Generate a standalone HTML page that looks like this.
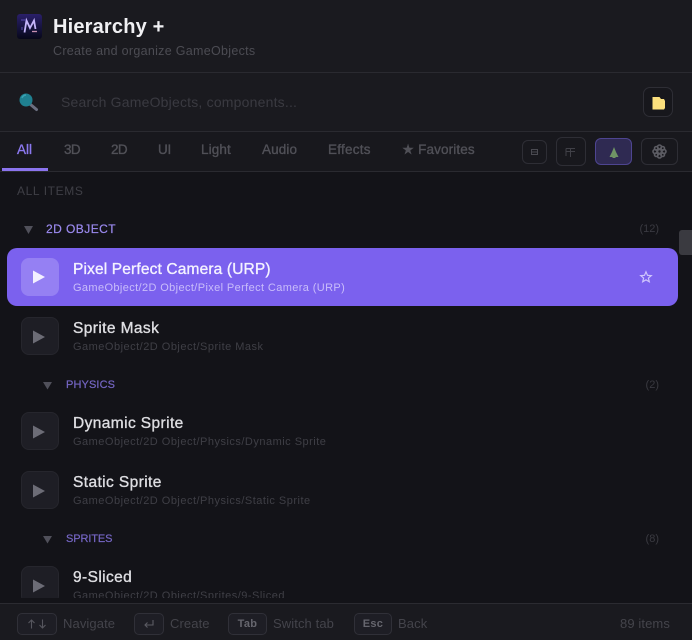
<!DOCTYPE html>
<html><head><meta charset="utf-8">
<style>
*{margin:0;padding:0;box-sizing:border-box}
html,body{width:692px;height:640px;overflow:hidden;background:#131318;font-family:"Liberation Sans",sans-serif}
#app{position:relative;width:692px;height:640px;overflow:hidden;filter:blur(.3px)}
.a{position:absolute;white-space:nowrap}
.bar{position:absolute;left:0;width:692px;background:#1a1a1f}
.line{position:absolute;left:0;width:692px;height:1px;background:#2a2a30}
.tab{position:absolute;top:142px;font-size:13.5px;line-height:16px;-webkit-text-stroke:.35px currentColor;color:#505057;letter-spacing:.12px;white-space:nowrap}
.btn{position:absolute;border:1px solid #2e2e35;border-radius:6px}
.ic{position:absolute;left:21px;width:38px;height:38px;border-radius:8px;background:#1e1e25;border:1px solid #26262d}
.ic svg{position:absolute;left:9px;top:11px}
.t{position:absolute;left:73px;font-size:15.500px;line-height:18px;-webkit-text-stroke:.35px currentColor;color:#dedee2;letter-spacing:.4px;white-space:nowrap}
.s{position:absolute;left:73px;font-size:11px;line-height:14px;color:#3f3f46;letter-spacing:.49px;white-space:nowrap}
.sec{position:absolute;font-size:11px;line-height:14px;-webkit-text-stroke:.2px currentColor;color:#7566c4;letter-spacing:.12px;white-space:nowrap}
.n{position:absolute;right:33px;font-size:11px;line-height:14px;color:#3a3a41;white-space:nowrap}
.key{position:absolute;top:613px;height:22px;border:1px solid #303038;border-radius:5px;background:#1e1e25;font-size:11px;line-height:20px;font-weight:bold;color:#66666e;text-align:center;letter-spacing:.3px}
.h{position:absolute;top:616px;font-size:13px;line-height:16px;color:#44444b;letter-spacing:.1px;white-space:nowrap}
</style></head>
<body><div id="app">

<div class="bar" style="top:0;height:72px"></div>
<div class="bar" style="top:73px;height:58px"></div>
<div class="bar" style="top:132px;height:39px;background:#18181d"></div>
<div class="line" style="top:72px"></div>
<div class="line" style="top:131px"></div>
<div class="line" style="top:171px"></div>

<svg class="a" style="left:17px;top:14px" width="25" height="25" viewBox="0 0 25 25">
<defs><linearGradient id="g" x1="0" y1="0" x2="0" y2="1"><stop offset="0" stop-color="#2a1f6a"/><stop offset=".6" stop-color="#14123a"/><stop offset="1" stop-color="#07071a"/></linearGradient></defs>
<rect width="25" height="25" rx="3" fill="url(#g)"/>
<path d="M7.500 18.500 L9.500 6.500 L13 14 L17 6.500 L18.500 15" fill="none" stroke="#c4b5fa" stroke-width="1.800"/>
<path d="M4 6 H9" stroke="#5a4ab0" stroke-width="1"/>
<path d="M15 17.500 h5" stroke="#c890b0" stroke-width="1.300"/>
<path d="M5 13 v3" stroke="#5a4ab0" stroke-width="1"/>
</svg>
<div class="a" style="left:53px;top:15px;font-size:20px;line-height:24px;font-weight:bold;color:#f0f0f3;letter-spacing:.18px">Hierarchy +</div>
<div class="a" style="left:53px;top:43px;font-size:12.500px;line-height:16px;color:#4c4c53;letter-spacing:.3px">Create and organize GameObjects</div>

<svg class="a" style="left:18px;top:92px" width="21" height="20" viewBox="0 0 21 20">
<path d="M12.500 12.500 L18.500 17.500" stroke="#6b6f80" stroke-width="3" stroke-linecap="round"/>
<circle cx="8" cy="8" r="6.500" fill="#1f8090"/>
<path d="M4 6 A4.500 4.500 0 0 1 8 3" stroke="#3aa3b3" stroke-width="1.500" fill="none"/>
</svg>
<div class="a" style="left:61px;top:94px;font-size:14px;line-height:17px;color:#3a3a41;letter-spacing:.2px">Search GameObjects, components...</div>
<div class="btn" style="left:643px;top:87px;width:30px;height:30px;border-radius:7px;background:#17171c"></div>
<svg class="a" style="left:651px;top:96px" width="15" height="15" viewBox="0 0 15 15"><path d="M1.500 1 H8.500 L10 3 H13 L14 5 V12 L13 13.500 H1.500 Z" fill="#fbe07d"/></svg>

<div class="tab" style="left:17px;color:#8b78ee;letter-spacing:0">All</div>
<div class="tab" style="left:64px;letter-spacing:-.6px">3D</div>
<div class="tab" style="left:111px;letter-spacing:-.6px">2D</div>
<div class="tab" style="left:158px;letter-spacing:-.3px">UI</div>
<div class="tab" style="left:201px">Light</div>
<div class="tab" style="left:262px">Audio</div>
<div class="tab" style="left:328px;letter-spacing:.25px">Effects</div>
<div class="tab" style="left:402px">★ Favorites</div>
<div class="a" style="left:2px;top:168px;width:46px;height:3px;background:#8b74ee"></div>

<div class="btn" style="left:522px;top:140px;width:25px;height:24px"></div>
<svg class="a" style="left:530px;top:148px" width="9" height="8" viewBox="0 0 9 8"><path d="M1.500 1.500 H7.500 V6.500 H1.500 Z M1.500 4 H7.500" fill="none" stroke="#4a4a51"/></svg>
<div class="btn" style="left:556px;top:137px;width:30px;height:29px"></div>
<svg class="a" style="left:565px;top:147px" width="12" height="11" viewBox="0 0 12 11"><path d="M1 1.500 H10 M1 4.500 H10 M5.500 1.500 V10 M1 1.500 V9" fill="none" stroke="#404047"/></svg>
<div class="btn" style="left:595px;top:138px;width:37px;height:27px;background:#2f2a52;border-color:#4e4591"></div>
<svg class="a" style="left:608px;top:146px" width="12" height="13" viewBox="0 0 12 13"><path d="M6 1 L8 6 L10.500 11 H1.500 L4 6 Z" fill="#6f9465"/><path d="M4.500 11 h3 v1 h-3z" fill="#6f9465"/></svg>
<div class="btn" style="left:641px;top:138px;width:37px;height:27px"></div>
<svg class="a" style="left:652px;top:144px" width="15" height="15" viewBox="0 0 15 15" fill="none" stroke="#5c5c63" stroke-width="1.600"><circle cx="7.500" cy="7.500" r="2"/><circle cx="7.500" cy="3" r="2"/><circle cx="7.500" cy="12" r="2"/><circle cx="3" cy="7.500" r="2"/><circle cx="12" cy="7.500" r="2"/><circle cx="4.300" cy="4.300" r="1.800"/><circle cx="10.700" cy="4.300" r="1.800"/><circle cx="4.300" cy="10.700" r="1.800"/><circle cx="10.700" cy="10.700" r="1.800"/></svg>

<div class="a" style="left:17px;top:184px;font-size:12px;line-height:14px;color:#3f3f46;letter-spacing:.62px">ALL ITEMS</div>

<svg class="a" style="left:23px;top:225px" width="11" height="10"><path d="M1 1 H10 L5.500 9 Z" fill="#50505a"/></svg>
<div class="sec" style="left:46px;top:222px;font-size:12px;color:#9b8aef;letter-spacing:.45px;line-height:15px">2D OBJECT</div>
<div class="n" style="top:222px">(12)</div>

<div class="a" style="left:679px;top:230px;width:13px;height:25px;background:#3a3a40;border-radius:3px 0 0 3px"></div>

<div class="a" style="left:7px;top:248px;width:671px;height:58px;border-radius:10px;background:#7b61ee"></div>
<div class="ic" style="left:21px;top:258px;background:#9580f3;border-color:#9580f3"><svg style="top:10px" width="16" height="16" viewBox="0 0 16 16"><path d="M2 1.500 L14 8 L2 14.500 Z" fill="#f3f0ff"/></svg></div>
<div class="t" style="top:261px;color:#f4f2ff;letter-spacing:.15px">Pixel Perfect Camera (URP)</div>
<div class="s" style="top:281px;color:#c9bdfa;letter-spacing:.38px">GameObject/2D Object/Pixel Perfect Camera (URP)</div>
<svg class="a" style="left:639px;top:270px" width="14" height="14" viewBox="0 0 14 14"><path d="M7 1.800 L8.500 5.300 L12.300 5.600 L9.400 8.100 L10.300 11.800 L7 9.800 L3.700 11.800 L4.600 8.100 L1.700 5.600 L5.500 5.300 Z" fill="none" stroke="#cfc5fc" stroke-width="1.200"/></svg>

<div class="ic" style="top:317px"><svg width="16" height="16" viewBox="0 0 16 16"><path d="M2 1.500 L14 8 L2 14.500 Z" fill="#6c6c76"/></svg></div>
<div class="t" style="top:320px">Sprite Mask</div>
<div class="s" style="top:340px">GameObject/2D Object/Sprite Mask</div>

<svg class="a" style="left:43px;top:381px" width="9" height="9"><path d="M0 1 H9 L4.500 8.500 Z" fill="#50505a"/></svg>
<div class="sec" style="left:66px;top:378px">PHYSICS</div>
<div class="n" style="top:378px">(2)</div>

<div class="ic" style="top:412px"><svg width="16" height="16" viewBox="0 0 16 16"><path d="M2 1.500 L14 8 L2 14.500 Z" fill="#6c6c76"/></svg></div>
<div class="t" style="top:415px">Dynamic Sprite</div>
<div class="s" style="top:435px">GameObject/2D Object/Physics/Dynamic Sprite</div>

<div class="ic" style="top:471px"><svg width="16" height="16" viewBox="0 0 16 16"><path d="M2 1.500 L14 8 L2 14.500 Z" fill="#6c6c76"/></svg></div>
<div class="t" style="top:474px">Static Sprite</div>
<div class="s" style="top:494px">GameObject/2D Object/Physics/Static Sprite</div>

<svg class="a" style="left:43px;top:535px" width="9" height="9"><path d="M0 1 H9 L4.500 8.500 Z" fill="#50505a"/></svg>
<div class="sec" style="left:66px;top:532px;letter-spacing:-.1px">SPRITES</div>
<div class="n" style="top:532px">(8)</div>

<div class="ic" style="top:566px"><svg width="16" height="16" viewBox="0 0 16 16"><path d="M2 1.500 L14 8 L2 14.500 Z" fill="#6c6c76"/></svg></div>
<div class="t" style="top:569px">9-Sliced</div>
<div class="s" style="top:589px">GameObject/2D Object/Sprites/9-Sliced</div>

<div class="bar" style="top:598px;height:5px;background:#131318"></div>
<div class="bar" style="top:603px;height:37px"></div>
<div class="line" style="top:603px;background:#2b2b31"></div>

<div class="key" style="left:17px;width:40px"></div>
<svg class="a" style="left:27px;top:619px" width="20" height="10" viewBox="0 0 20 10" fill="none" stroke="#56565e" stroke-width="1.100"><path d="M4.500 9.500 V1 M1.500 4 L4.500 1 L7.500 4 M15.500 .500 V9 M12.500 6 L15.500 9 L18.500 6"/></svg>
<div class="h" style="left:63px">Navigate</div>
<div class="key" style="left:134px;width:30px"></div>
<svg class="a" style="left:143px;top:619px" width="11" height="10" viewBox="0 0 11 10" fill="none" stroke="#5c5c64" stroke-width="1.100"><path d="M10 1 V6 H2 M4.500 3.500 L2 6 L4.500 8.500"/></svg>
<div class="h" style="left:170px">Create</div>
<div class="key" style="left:228px;width:39px">Tab</div>
<div class="h" style="left:273px">Switch tab</div>
<div class="key" style="left:354px;width:38px">Esc</div>
<div class="h" style="left:398px">Back</div>
<div class="h" style="left:620px">89 items</div>

</div></body></html>
